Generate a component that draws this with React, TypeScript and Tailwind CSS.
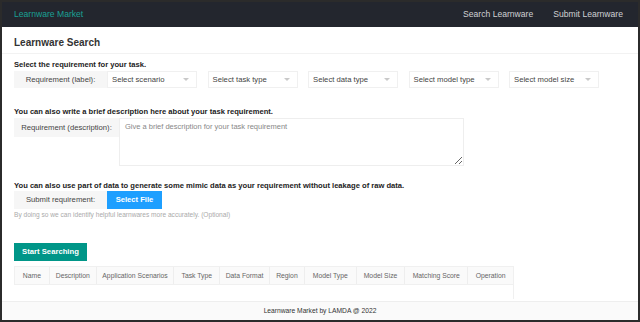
import React from 'react'

const selects = ['Select scenario', 'Select task type', 'Select data type', 'Select model type', 'Select model size']

const columns: [string, string][] = [
  ['Name', 'w-[34px]'],
  ['Description', 'w-[47px]'],
  ['Application Scenarios', 'w-[78px]'],
  ['Task Type', 'w-[46px]'],
  ['Data Format', 'w-[50px]'],
  ['Region', 'w-[35px]'],
  ['Model Type', 'w-[52px]'],
  ['Model Size', 'w-[49px]'],
  ['Matching Score', 'w-[63px]'],
  ['Operation', 'w-[46px]'],
]

const App = () => {
  return (
    <div className="w-[640px] h-[322px] border-2 border-[#2b2b2b] flex flex-col overflow-hidden bg-white font-['Liberation_Sans',Arial,sans-serif]">
      {/* Top bar */}
      <nav className="h-[25px] shrink-0 bg-[#23262e] flex items-center justify-between pl-[12px] pr-[15px]">
        <span className="text-[8.6px] text-[#1aa094]">Learnware Market</span>
        <div className="flex gap-[20px] text-[8.6px] text-[#d0d1d3]">
          <span>Search Learnware</span>
          <span>Submit Learnware</span>
        </div>
      </nav>

      <main className="flex-1 overflow-hidden">
        <div className="h-[27px] flex items-end pb-[4px] px-[12px] border-b border-[#f2f2f2]">
          <h1 className="text-[10px] font-semibold text-[#333] leading-[13px]">Learnware Search</h1>
        </div>

        <div className="px-[12px]">
          <p className="mt-[5px] text-[7.6px] font-bold text-[#222] leading-[12px]">Select the requirement for your task.</p>
          <div className="flex h-[17px]">
            <div className="w-[93px] bg-[#f6f6f6] flex items-center justify-center text-[7.7px] text-[#444]">
              Requirement (label):
            </div>
            <div className="flex gap-[10.5px]">
              {selects.map((s) => (
                <div key={s} className="w-[90px] border border-[#f0f0f0] bg-white flex items-center justify-between pl-[4px] pr-[7px]">
                  <span className="text-[7.7px] text-[#444]">{s}</span>
                  <span className="w-0 h-0 border-l-[3px] border-r-[3px] border-t-[3px] border-l-transparent border-r-transparent border-t-[#c9c9c9]" />
                </div>
              ))}
            </div>
          </div>

          <p className="mt-[18px] text-[7.6px] font-bold text-[#222] leading-[12px]">
            You can also write a brief description here about your task requirement.
          </p>
          <div className="flex">
            <div className="w-[105px] h-[19px] bg-[#f6f6f6] flex items-center justify-center text-[7.7px] text-[#444]">
              Requirement (description):
            </div>
            <textarea
              className="w-[345px] h-[48px] border border-[#eeeeee] px-[5px] py-[3px] text-[7.5px] leading-[10px] text-[#444] placeholder:text-[#888] outline-none"
              placeholder="Give a brief description for your task requirement"
            />
          </div>

          <p className="mt-[14px] text-[7.6px] font-bold text-[#222] leading-[11px]">
            You can also use part of data to generate some mimic data as your requirement without leakage of raw data.
          </p>
          <div className="flex h-[18px]">
            <div className="w-[93px] bg-[#f6f6f6] flex items-center justify-center text-[7.7px] text-[#444]">
              Submit requirement:
            </div>
            <button className="w-[55px] bg-[#1e9fff] text-white text-[7.6px] font-bold">Select File</button>
          </div>
          <p className="mt-[1px] text-[6.6px] leading-[10px] text-[#aaa]">
            By doing so we can identify helpful learnwares more accurately. (Optional)
          </p>

          <button className="mt-[23px] w-[73px] h-[18px] bg-[#009688] text-white text-[7.7px] font-bold">
            Start Searching
          </button>

          <div className="mt-[5px] w-[500px]">
            <div className="flex h-[19px] bg-[#fafafa] border border-[#f0f0f0]">
              {columns.map(([c, w], i) => (
                <div
                  key={c}
                  className={`${w} flex items-center justify-center text-[6.8px] text-[#666] ${i > 0 ? 'border-l border-[#eeeeee]' : ''}`}
                >
                  {c}
                </div>
              ))}
            </div>
            <div className="h-[14px] border-r border-[#f0f0f0]" />
          </div>
        </div>
      </main>

      <footer className="h-[19px] shrink-0 bg-[#fafafa] border-t border-[#eeeeee] flex items-center justify-center text-[6.7px] text-[#333]">
        Learnware Market by LAMDA @ 2022
      </footer>
    </div>
  )
}

export default App
